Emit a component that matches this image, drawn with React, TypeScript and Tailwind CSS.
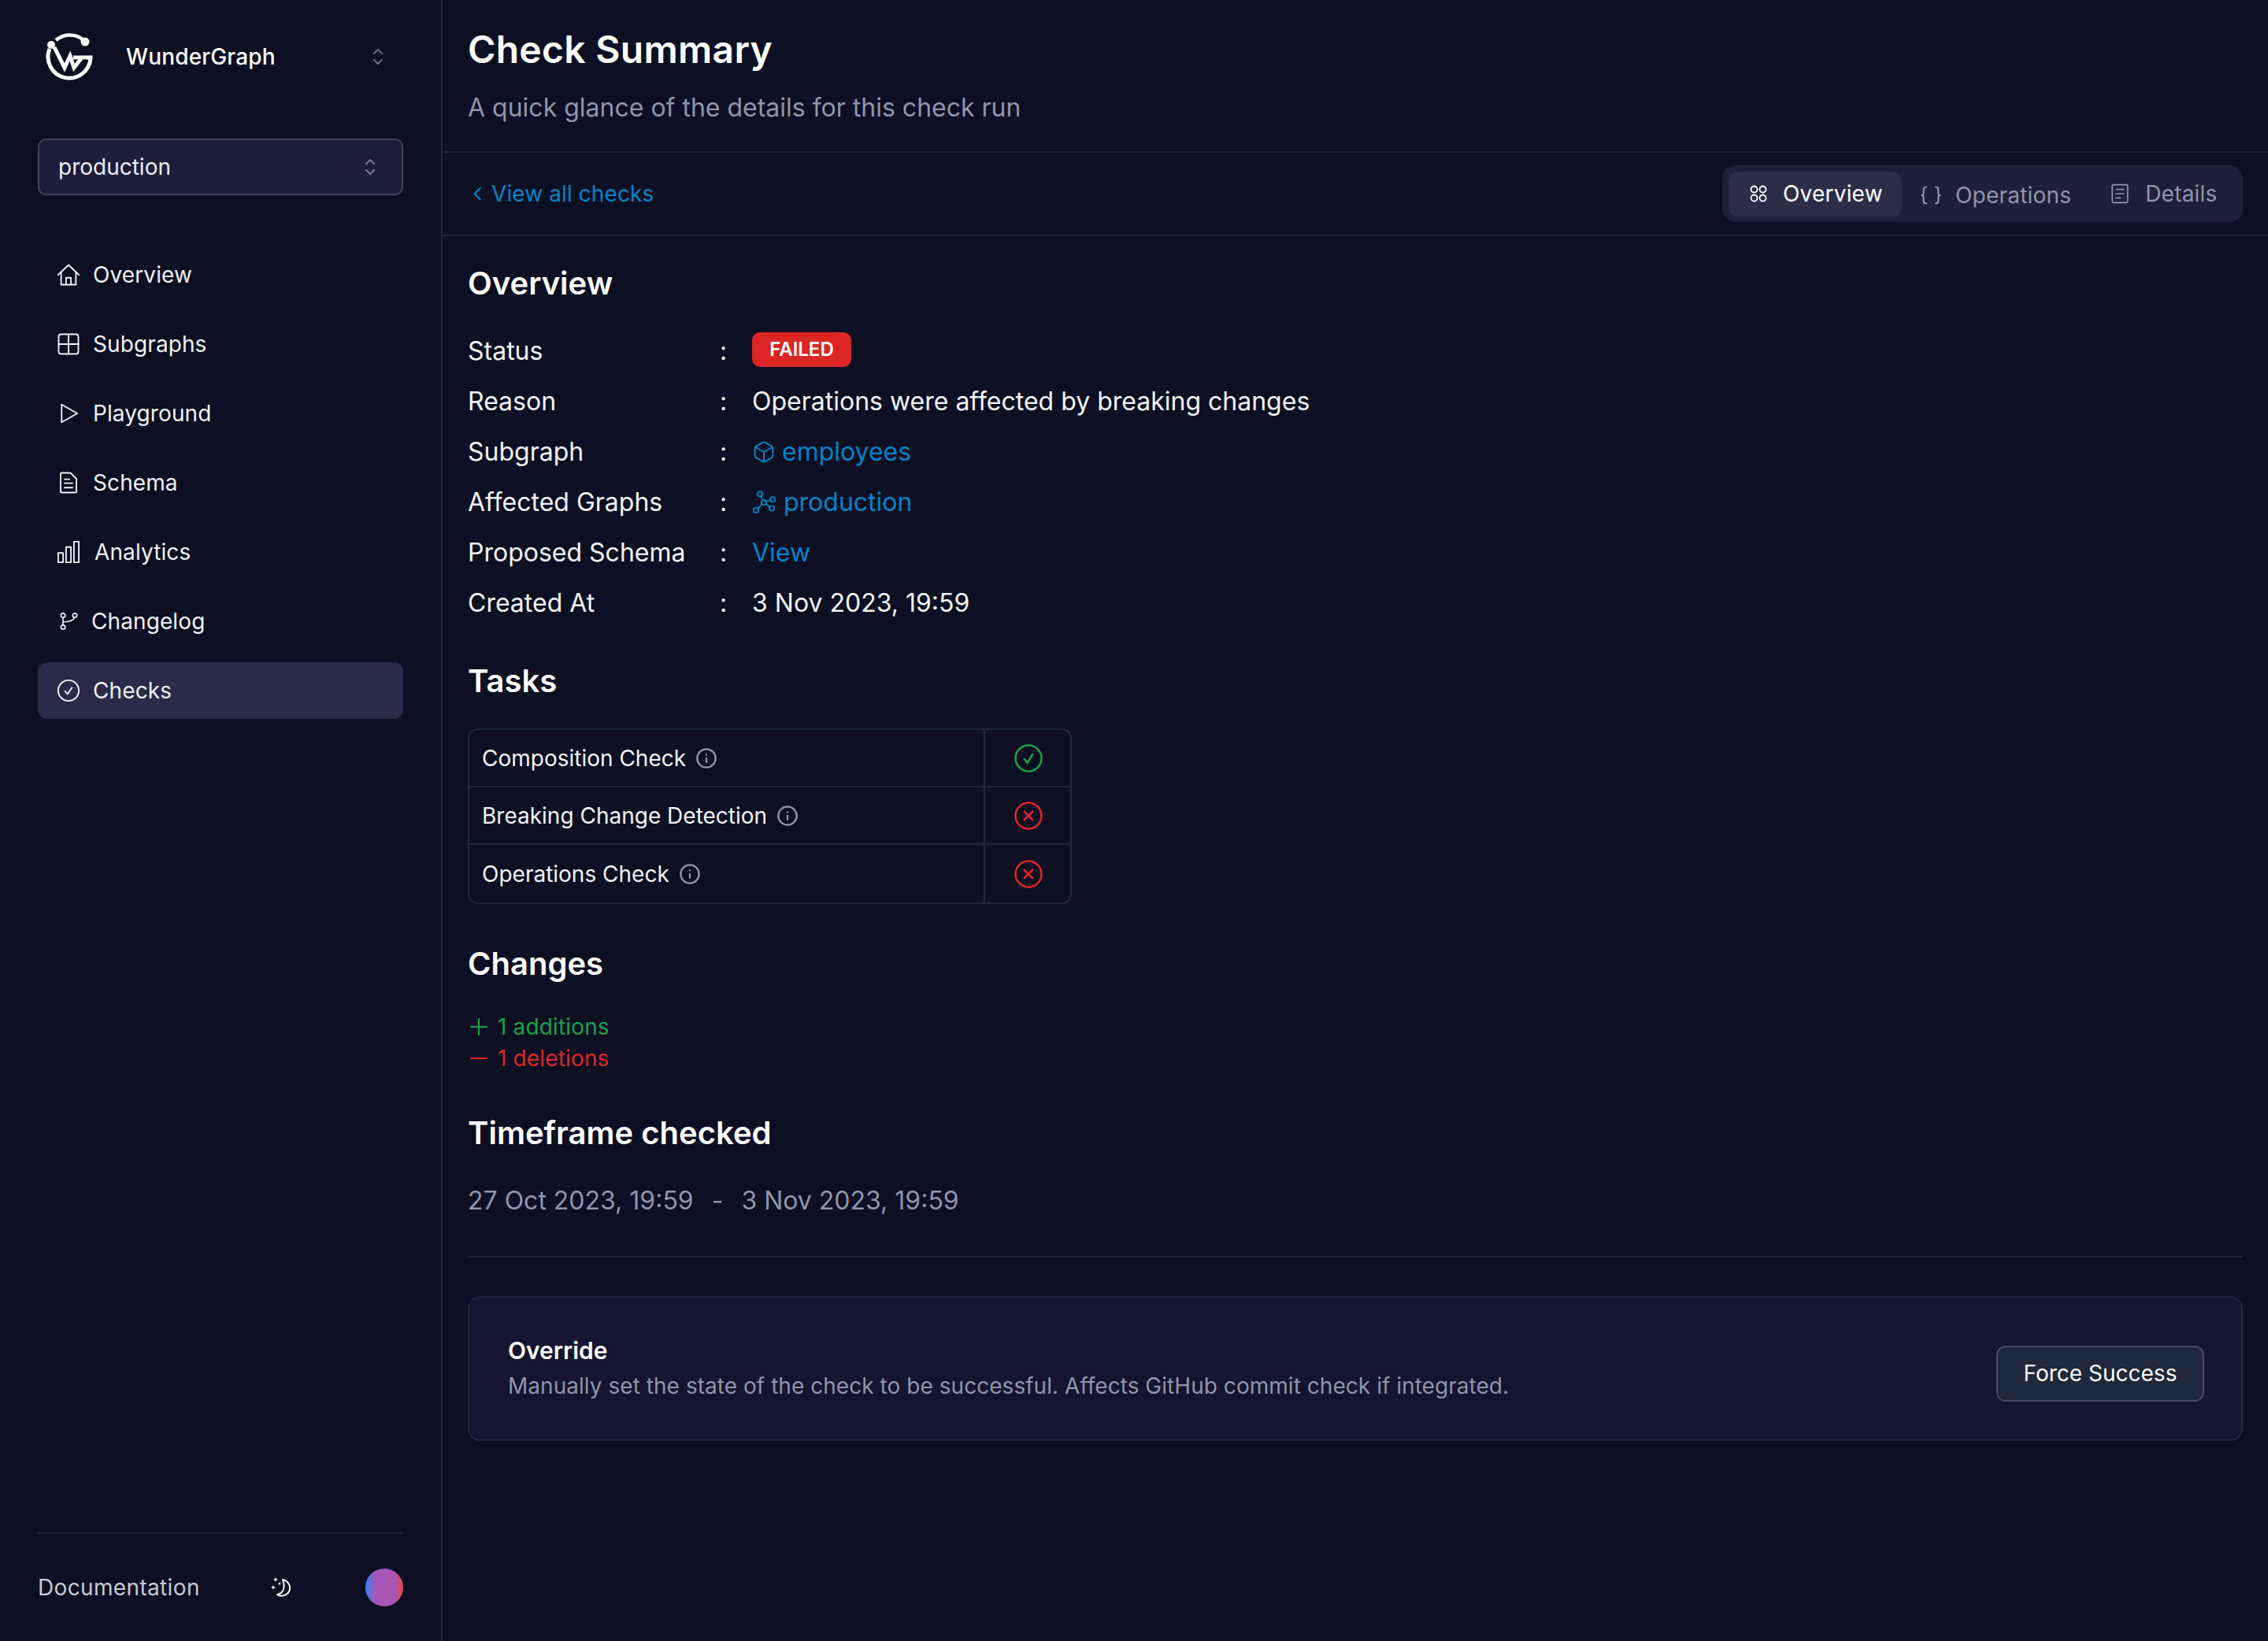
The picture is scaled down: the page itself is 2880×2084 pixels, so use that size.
import type { ReactNode } from "react";
import { ChevronLeft, Box, Info } from "lucide-react";

function Ico({ size = 28, vb = 24, sw = 1.5, className = "", children }: { size?: number; vb?: number; sw?: number; className?: string; children: ReactNode }) {
  return (
    <svg width={size} height={size} viewBox={`0 0 ${vb} ${vb}`} fill="none" stroke="currentColor" strokeWidth={sw} strokeLinecap="round" strokeLinejoin="round" className={`shrink-0 ${className}`}>
      {children}
    </svg>
  );
}

function Logo() {
  return (
    <svg width="60" height="60" viewBox="0 0 60 60" fill="none" className="shrink-0">
      <path d="M5 20 A27 27 0 1 0 57 31 L35 31" stroke="#fff" strokeWidth="5" />
      <path d="M13 9 A27 27 0 0 1 47 8" stroke="#fff" strokeWidth="4.5" />
      <circle cx="7" cy="15" r="5" fill="#fff" />
      <circle cx="50" cy="11" r="5.5" fill="#fff" />
      <path d="M11 18 L24 44 L31 29 L36 44 L46 31" stroke="#fff" strokeWidth="5" strokeLinejoin="miter" />
    </svg>
  );
}

function UpDown({ className = "" }: { className?: string }) {
  return (
    <svg width="14" height="22" viewBox="0 0 14 22" fill="none" stroke="currentColor" strokeWidth="2" strokeLinecap="round" strokeLinejoin="round" className={className}>
      <path d="M2 7 L7 2 L12 7" />
      <path d="M2 15 L7 20 L12 15" />
    </svg>
  );
}

const navIcons: Record<string, ReactNode> = {
  Overview: (
    <Ico size={30}>
      <path d="M1.5 12 L12 2 L22.5 12" />
      <path d="M4.5 9.5 V22 H19.5 V9.5" />
      <path d="M9.5 22 V15 H14.5 V22" />
    </Ico>
  ),
  Subgraphs: (
    <Ico size={30}>
      <rect x="2" y="2" width="20" height="20" rx="2.5" />
      <path d="M12 2 V22 M2 12 H22" />
    </Ico>
  ),
  Playground: (
    <Ico size={30}>
      <path d="M5 3 L21 12 L5 21 Z" />
    </Ico>
  ),
  Schema: (
    <Ico size={30}>
      <path d="M4 3.5 Q4 2 5.5 2 H14 L20 8 V21 Q20 22 19 22 H5 Q4 22 4 21 Z" />
      <path d="M8 8.5 H13 M8 12.5 H16 M8 17 H16" />
    </Ico>
  ),
  Analytics: (
    <Ico size={30}>
      <rect x="1.5" y="13" width="5" height="9.5" />
      <rect x="9.5" y="7" width="5" height="15.5" />
      <rect x="17.5" y="1.5" width="5" height="21" />
    </Ico>
  ),
  Changelog: (
    <Ico size={24} sw={1.7}>
      <circle cx="5" cy="4.5" r="2.7" />
      <circle cx="5" cy="19.5" r="2.7" />
      <circle cx="20" cy="4.5" r="2.7" />
      <path d="M5 7.2 V16.8 M5 13 Q17 13 20 7.2" />
    </Ico>
  ),
  Checks: (
    <Ico size={30}>
      <circle cx="12" cy="12" r="10.5" />
      <path d="M8.5 12.5 L11 15.5 L15.5 9" />
    </Ico>
  ),
};

const navItems = [
  { label: "Overview", gap: "gap-[16px]" },
  { label: "Subgraphs", gap: "gap-[16px]" },
  { label: "Playground", gap: "gap-[16px]" },
  { label: "Schema", gap: "gap-[16px]" },
  { label: "Analytics", gap: "gap-[18px]" },
  { label: "Changelog", gap: "gap-[14px]" },
  { label: "Checks", gap: "gap-[16px]" },
];

function Sidebar() {
  return (
    <aside className="w-[562px] shrink-0 h-[2084px] border-r-2 border-[#1e293b] flex flex-col px-[48px]">
      <div className="flex items-center pt-[42px] h-[102px] pl-[10px]">
        <Logo />
        <span className="ml-[42px] text-[28px] tracking-[0.15px] font-medium text-white flex-1">WunderGraph</span>
        <UpDown className="text-[#6b6d80] mr-[25px]" />
      </div>
      <div className="mt-[74px] h-[72px] rounded-[10px] border-2 border-[#43445a] bg-[#1d1e3a] flex items-center justify-between pl-[24px] pr-[33px] text-[28px] text-[#eceef4]">
        production
        <UpDown className="text-[#7a7c8e]" />
      </div>
      <nav className="mt-[65px] flex flex-col gap-[16px]">
        {navItems.map(n => (
          <div key={n.label} className={`h-[72px] rounded-[12px] flex items-center pl-[24px] text-[28px] tracking-[0.1px] text-[#eff1f6] ${n.gap} ${n.label === "Checks" ? "bg-[#2a2b48]" : ""}`}>
            <span className="w-[30px] flex justify-center">{navIcons[n.label]}</span>
            {n.label}
          </div>
        ))}
      </nav>
      <div className="mt-auto mb-[44px] border-t-2 border-[#1e293b] pt-[44px] flex items-center">
        <span className="text-[28px] tracking-[0.35px] text-[#c8cad3] flex-1">Documentation</span>
        <svg width="26" height="26" viewBox="0 0 26 26" fill="none" className="mr-[94px]">
          <path d="M15 3 C23 5 26 13 23 18 C20 24 12 25 8 22 C15 21 19 14 15 3 Z" stroke="#fff" strokeWidth="2" strokeLinejoin="round" />
          <path d="M6 0 L7 2 L9 3 L7 4 L6 6 L5 4 L3 3 L5 2 Z M3 10 L3.8 12 L6 13 L3.8 14 L3 16 L2.2 14 L0 13 L2.2 12 Z M11 6 L11.7 7.3 L13 8 L11.7 8.7 L11 10 L10.3 8.7 L9 8 L10.3 7.3 Z" fill="#fff" />
        </svg>
        <div className="w-[48px] h-[48px] rounded-full bg-[linear-gradient(90deg,#3b82f6_0%,#a855b8_28%,#a855b8_78%,#ef4444_100%)]" />
      </div>
    </aside>
  );
}

function Tabs() {
  return (
    <div className="h-[72px] w-[661px] rounded-[16px] bg-[#1e2038] flex items-center pl-[8px] text-[28px] tracking-[0.2px]">
      <div className="h-[57px] w-[220px] rounded-[12px] bg-[#2c2e48] flex items-center pl-[26px] gap-[19px] text-white">
        <Ico size={24} sw={1.8}>
          <circle cx="6.5" cy="6.5" r="4" />
          <circle cx="17.5" cy="6.5" r="4" />
          <circle cx="6.5" cy="17.5" r="4" />
          <circle cx="17.5" cy="17.5" r="4" />
        </Ico>
        Overview
      </div>
      <div className="flex items-center ml-[23px] gap-[17px] text-[#8f96a8] translate-y-[2px]">
        <Ico size={28} sw={1.8}>
          <path d="M7 3 Q4 3 4 6 V9.5 Q4 12 2 12 Q4 12 4 14.5 V18 Q4 21 7 21" />
          <path d="M17 3 Q20 3 20 6 V9.5 Q20 12 22 12 Q20 12 20 14.5 V18 Q20 21 17 21" />
        </Ico>
        Operations
      </div>
      <div className="flex items-center ml-[49px] gap-[19px] text-[#8f96a8]">
        <Ico size={26} sw={1.6}>
          <rect x="3" y="1.5" width="18" height="21" rx="2" />
          <path d="M7.5 7 H16.5 M7.5 12 H16.5 M7.5 17 H12.5" />
        </Ico>
        Details
      </div>
    </div>
  );
}

function Row({ label, children }: { label: string; children: ReactNode }) {
  return (
    <div className="h-[64px] flex items-center text-[32px] text-[#f2f4f8]">
      <span className="w-[320px]">{label}</span>
      <span className="w-[41px]">:</span>
      {children}
    </div>
  );
}

function InfoIcon() {
  return <Info size={28} strokeWidth={2} className="text-[#8f96a8] shrink-0" />;
}

function Task({ label, ok, last }: { label: string; ok: boolean; last?: boolean }) {
  return (
    <div className={`flex h-[73px] ${last ? "" : "border-b-2 border-[#1e293b]"}`}>
      <div className="w-[655px] border-r-2 border-[#1e293b] flex items-center pl-[16px] gap-[12px] text-[28px] text-[#f2f4f8]">
        {label}
        <InfoIcon />
      </div>
      <div className="flex-1 flex items-center justify-center pl-[2px]">
        {ok ? (
          <Ico size={36} sw={1.7} className="text-[#16a34a]">
            <circle cx="12" cy="12" r="11" />
            <path d="M8.5 12.5 L11 16 L15.5 8.5" />
          </Ico>
        ) : (
          <Ico size={36} sw={1.7} className="text-[#dc2626]">
            <circle cx="12" cy="12" r="11" />
            <path d="M8.5 8.5 L15.5 15.5 M15.5 8.5 L8.5 15.5" />
          </Ico>
        )}
      </div>
    </div>
  );
}

export default function App() {
  return (
    <div className="flex w-full min-h-screen bg-[#0d0f23] font-[Inter,sans-serif]">
      <Sidebar />
      <main className="flex-1 min-w-0">
        <header className="h-[194px] border-b-2 border-[#1e293b] px-[32px] pt-[31px]">
          <h1 className="text-[48px] leading-[64px] tracking-[0.3px] font-semibold text-white">Check Summary</h1>
          <p className="mt-[18px] text-[32px] leading-[48px] text-[#8f96a8]">A quick glance of the details for this check run</p>
        </header>
        <div className="h-[106px] border-b-2 border-[#1e293b] px-[32px] flex items-center justify-between">
          <div className="flex items-center gap-[4px] text-[28px] tracking-[0.1px] text-[#0284c7] -ml-[2px]">
            <ChevronLeft size={28} strokeWidth={2} />
            View all checks
          </div>
          <Tabs />
        </div>
        <section className="px-[32px]">
          <h2 className="mt-[32px] text-[40px] leading-[56px] font-semibold text-white">Overview</h2>
          <div className="mt-[26px]">
            <Row label="Status">
              <span className="h-[44px] w-[126px] rounded-[10px] bg-[#dc2626] flex items-center justify-center text-[24px] font-semibold text-white -translate-y-[2px]">FAILED</span>
            </Row>
            <Row label="Reason">Operations were affected by breaking changes</Row>
            <Row label="Subgraph">
              <span className="flex items-center gap-[8px] text-[#0284c7]">
                <Box size={30} strokeWidth={1.6} />
                employees
              </span>
            </Row>
            <Row label="Affected Graphs">
              <span className="flex items-center gap-[10px] text-[#0284c7]">
                <Ico size={30} sw={1.5}>
                  <circle cx="8" cy="3.5" r="2.5" />
                  <circle cx="12" cy="12" r="2.5" />
                  <circle cx="4" cy="20" r="2.5" />
                  <circle cx="21" cy="9" r="2.5" />
                  <circle cx="20" cy="18" r="2.5" />
                  <path d="M9 6 L11 10 M10 14 L6 18 M14 11 L19 9.5 M14 13.5 L18 17" />
                </Ico>
                production
              </span>
            </Row>
            <Row label="Proposed Schema">
              <span className="text-[#0284c7]">View</span>
            </Row>
            <Row label="Created At">3 Nov 2023, 19:59</Row>
          </div>
          <h2 className="mt-[39px] text-[40px] leading-[56px] font-semibold text-white">Tasks</h2>
          <div className="mt-[32px] w-[767px] rounded-[12px] border-2 border-[#1e293b] overflow-hidden">
            <Task label="Composition Check" ok />
            <Task label="Breaking Change Detection" ok={false} />
            <Task label="Operations Check" ok={false} last />
          </div>
          <h2 className="mt-[48px] text-[40px] leading-[56px] font-semibold text-white">Changes</h2>
          <div className="mt-[32px] flex flex-col text-[28px] leading-[40px] tracking-[0.15px]">
            <div className="flex items-center gap-[10px] text-[#16a34a]">
              <svg width="28" height="28" viewBox="0 0 28 28" stroke="currentColor" strokeWidth="2" className="shrink-0">
                <path d="M14 3 V25 M3 14 H25" />
              </svg>
              1 additions
            </div>
            <div className="flex items-center gap-[10px] text-[#dc2626]">
              <svg width="28" height="28" viewBox="0 0 28 28" stroke="currentColor" strokeWidth="2" className="shrink-0">
                <path d="M3 14 H25" />
              </svg>
              1 deletions
            </div>
          </div>
          <h2 className="mt-[47px] text-[40px] leading-[56px] font-semibold text-white">Timeframe checked</h2>
          <div className="mt-[34px] flex text-[32px] leading-[48px] text-[#8f96a8]">
            <span>27 Oct 2023, 19:59</span>
            <span className="mx-[23px]">-</span>
            <span>3 Nov 2023, 19:59</span>
          </div>
          <div className="mt-[46px] h-[2px] bg-[#1e293b]" />
          <div className="mt-[49px] h-[184px] rounded-[16px] border-2 border-[#1e293b] bg-[#14152f] flex items-center justify-between pl-[49px] pr-[47px]">
            <div className="mb-[4px]">
              <div className="text-[30px] leading-[44px] font-semibold text-white">Override</div>
              <div className="mt-[3px] text-[28px] tracking-[0.04px] leading-[40px] text-[#8f96a8]">Manually set the state of the check to be successful. Affects GitHub commit check if integrated.</div>
            </div>
            <button className="mt-[12px] h-[71px] w-[264px] rounded-[12px] border-2 border-[#474a5e] bg-[#1e293b] text-[28px] text-white">Force Success</button>
          </div>
        </section>
      </main>
    </div>
  );
}
